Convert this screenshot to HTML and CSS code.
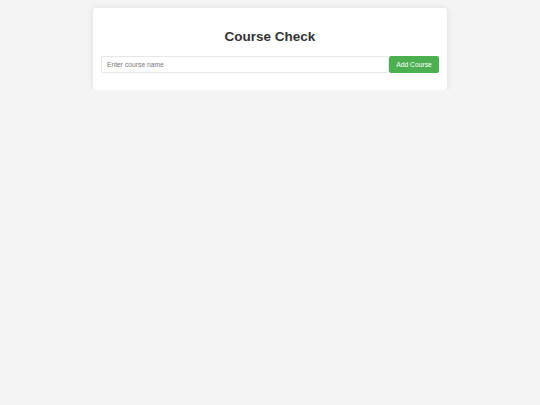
FILE: index.html
```html
<!DOCTYPE html>
<html lang="en">
<head>
<meta charset="utf-8">
<title>Course Check</title>
<link rel="stylesheet" href="styles.css">
</head>
<body>
<div class="container">
  <h1 class="title">Course Check</h1>
  <div class="input-group">
    <input class="course-input" type="text" placeholder="Enter course name">
    <button class="add-btn" type="button">Add Course</button>
  </div>
</div>
</body>
</html>
```
FILE: styles.css
```css
html, body {
  margin: 0;
  padding: 0;
  background: #f4f4f4;
  font-family: "Liberation Sans", Arial, sans-serif;
}
body {
  padding-top: 8px;
}
.container {
  box-sizing: border-box;
  width: 354px;
  height: 82px;
  margin: 0 auto;
  padding: 8.4px;
  background: #fff;
  border-radius: 3px;
  box-shadow: 0 0 6px rgba(0, 0, 0, 0.1);
}
.title {
  margin: 13px 0 11px;
  font-size: 13.5px;
  line-height: 15.5px;
  font-weight: bold;
  color: #333;
  text-align: center;
}
.input-group {
  display: flex;
  height: 17px;
}
.course-input {
  flex: 1;
  box-sizing: border-box;
  height: 17px;
  margin: 0;
  padding: 0 4.5px;
  border: 1px solid #e6e6e6;
  border-radius: 2px;
  font-family: "Liberation Sans", Arial, sans-serif;
  font-size: 6.75px;
  color: #333;
  outline: none;
}
.course-input::placeholder {
  color: #777;
}
.add-btn {
  box-sizing: border-box;
  height: 17px;
  margin: 0;
  padding: 0 6.75px;
  border: none;
  border-radius: 2px;
  background: #4caf50;
  color: #fff;
  font-family: "Liberation Sans", Arial, sans-serif;
  font-size: 6.75px;
  cursor: pointer;
}
```
